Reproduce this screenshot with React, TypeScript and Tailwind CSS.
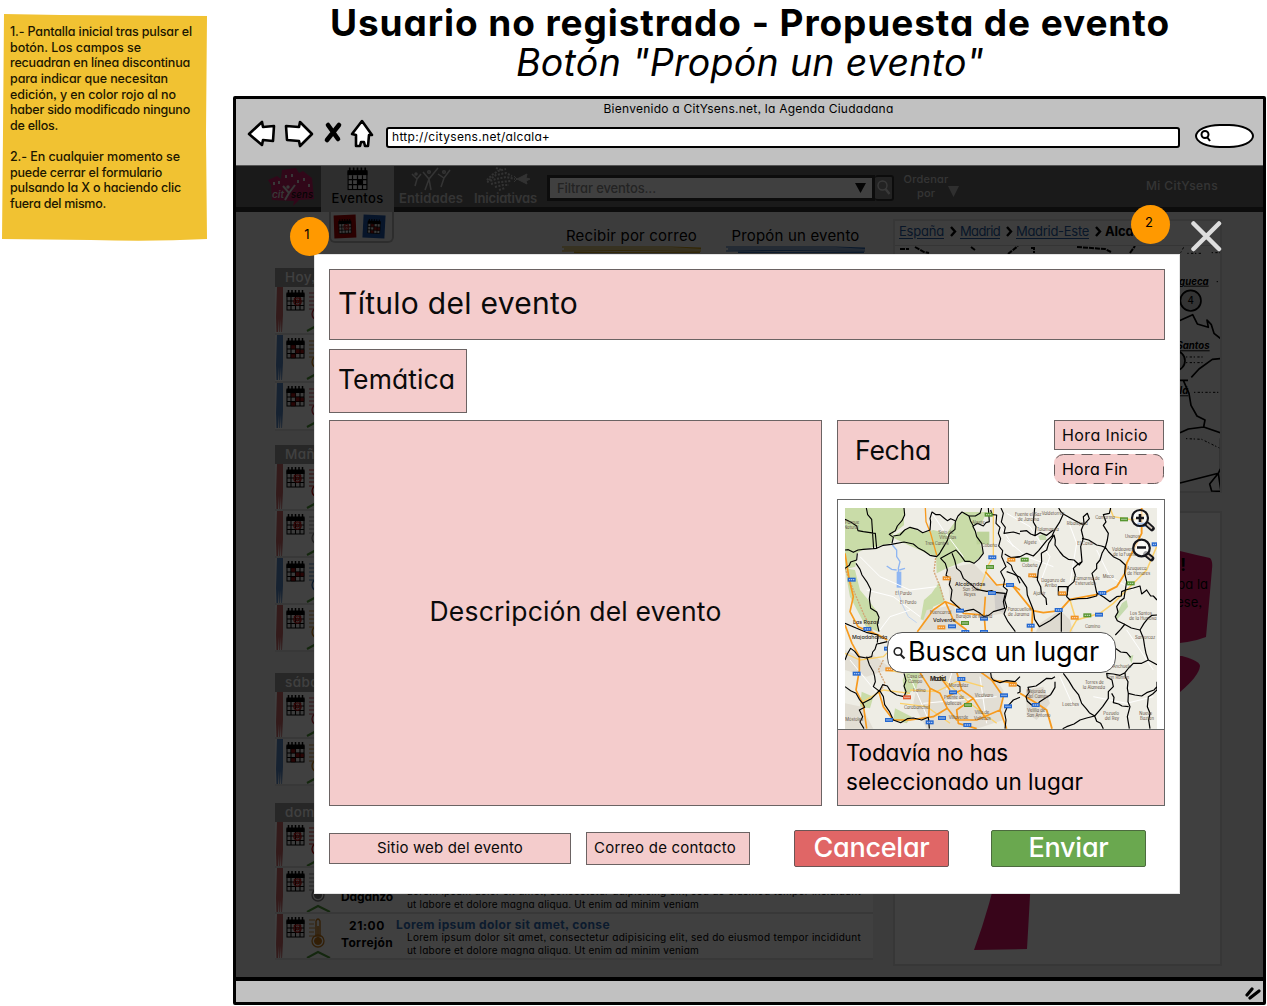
import { useLayoutEffect, useRef } from "react";
import type { ReactNode } from "react";

/* One line of text whose tracking is adjusted so that it spans `w` pixels. */
function Fit({ w, className = "", children }: { w: number; className?: string; children: string }) {
  const ref = useRef<HTMLSpanElement>(null);
  useLayoutEffect(() => {
    const el = ref.current;
    if (!el) return;
    el.style.letterSpacing = "0px";
    const natural = el.getBoundingClientRect().width;
    el.style.letterSpacing = `${(w - natural) / children.length}px`;
  }, [w, children]);
  return (
    <span ref={ref} className={`inline-block shrink-0 whitespace-nowrap ${className}`}>
      {children}
    </span>
  );
}

const noteLines: [string, number][] = [
  ["1.- Pantalla inicial tras pulsar el", 182],
  ["botón. Los campos se", 131],
  ["recuadran en línea discontinua", 180],
  ["para indicar que necesitan", 158],
  ["edición, y en color rojo al no", 166],
  ["haber sido modificado ninguno", 180],
  ["de ellos.", 48],
  ["", 0],
  ["2.- En cualquier momento se", 170],
  ["puede cerrar el formulario", 152],
  ["pulsando la X o haciendo clic", 171],
  ["fuera del mismo.", 96],
];

function Note() {
  return (
    <div className="relative mt-[13px] ml-px h-[229px] w-[207px]">
      <svg className="absolute inset-0" width="207" height="229">
        <path d="M3 1 L60 2 L206 3 L205 120 L206 226 Q150 229 90 227 L1 226 L2 120Z" fill="#f1c232" />
      </svg>
      <div className="relative pt-[11px] pl-[9px] text-[12.5px] leading-[15.65px] font-medium text-[#1c1600]">
        {noteLines.map(([t, w], i) => (
          <div key={i} className="h-[15.65px]">
            {t && <Fit w={w}>{t}</Fit>}
          </div>
        ))}
      </div>
    </div>
  );
}

function BrowserBar() {
  return (
    <div className="h-[67px] border-b border-[#555] bg-[#c1c1c1]">
      <div className="flex h-[19px] items-center justify-center pr-0.5 text-[12px] leading-none">
        <Fit w={290}>Bienvenido a CitYsens.net, la Agenda Ciudadana</Fit>
      </div>
      <div className="flex h-[36px] items-center pl-[11px]">
        <svg width="130" height="34" className="-mt-[5px]" fill="#fff" stroke="#000" strokeWidth="2.6" strokeLinejoin="round">
          <path d="M2 17 L15 5 L16 10 L27 9 L26 24 L16 23 L15 28Z" />
          <path d="M39 9 L52 10 L53 5 L65 17 L53 29 L52 24 L40 23Z" />
          <path d="M81 8 L91 22 M92 8 L80 23" strokeWidth="4.6" strokeLinecap="round" />
          <path d="M115 4 L105 17 L109 18 L109 29 L113 29 L114 25 L117 25 L118 29 L121 29 L122 18 L125 18Z" />
        </svg>
        <div className="mt-[2px] ml-[9px] flex h-[21px] w-[794px] items-center rounded-[3px] border-2 border-black bg-white pl-[4px] text-[12px] leading-none">
          <Fit w={158} className="-mt-[1px]">http://citysens.net/alcala+</Fit>
        </div>
        <div className="ml-[15px] flex h-[24px] w-[59px] items-center rounded-[42%/50%] border-2 border-black bg-white pl-[2px]">
          <svg width="12" height="14" fill="none" stroke="#000" strokeWidth="2">
            <circle cx="6" cy="5.5" r="3.5" />
            <path d="M8 8 L11 12" />
          </svg>
        </div>
      </div>
    </div>
  );
}

function CalendarIcon({ kind = "red", w = 19, h = 21 }: { kind?: "red" | "blue" | "plain"; w?: number; h?: number }) {
  return (
    <svg width={w} height={h} viewBox="0 0 19 21" className="shrink-0">
      <rect x="1" y="4" width="17" height="16" fill="#eee" stroke="#000" strokeWidth="1" />
      <rect x="0.5" y="2.5" width="18" height="4.5" fill="#000" />
      <path d="M2.500 0V4M6 0V4M9.500 0V4M13 0V4M16.500 0V4" stroke="#000" strokeWidth="1.500" />
      <path d="M5 7V20M9.500 7V20M14 7V20M1 11H18M1 15.500H18" stroke="#000" strokeWidth="1.100" />
      {kind === "plain" && <rect x="9.500" y="11" width="4.500" height="4.500" fill="#000" />}
      {kind === "red" && (
        <g fill="none" stroke="#c01515" strokeWidth="1.400">
          <circle cx="11.500" cy="11.500" r="3.600" />
          <circle cx="11.500" cy="11.500" r="1.400" />
          <path d="M8 8L9.500 9.500M15 8L13.500 9.500" />
        </g>
      )}
      {kind === "blue" && (
        <g fill="#a01515" stroke="#000" strokeWidth=".5">
          <path d="M5 7h4.500v4H5zM9.500 11H14v4.500H9.500zM14 15.500h4v-4h-4zM5 16h4.500v4H5z" />
        </g>
      )}
    </svg>
  );
}

function Logo() {
  return (
    <svg width="48" height="42" viewBox="0 0 48 42" className="shrink-0">
      <path d="M0 14 L9 10 L13 13 L14 4 L28 2 L31 7 L35 5 L44 12 L46 33 L31 34 L25 40 L26 35 L4 34 L3 19Z" fill="#c41e63" />
      <path d="M6 16v3M11 15v3M18 9v3M24 8v3M30 14v3M36 12v3M41 18v3" stroke="#ddd" strokeWidth="2" />
      <path d="M15 20 L21 27 L27 19 M21 27 L17 34" stroke="#ddd" strokeWidth="2" fill="none" />
      <circle cx="20" cy="21" r="1.700" fill="#ddd" />
      <text x="4" y="32" fontSize="10" fontStyle="italic" fontWeight="600" textLength="12" fill="#ddd">cit</text>
      <text x="23" y="32" fontSize="9.500" fontStyle="italic" fontWeight="500" textLength="22" fill="#111">sens</text>
    </svg>
  );
}

function SiteHeader() {
  return (
    <div className="flex h-[46px] border-b-[5px] border-[#303030] bg-[#686868] pl-[32px] text-[13px] leading-none">
      <Logo />
      <div className="ml-[5px] flex h-[46px] w-[73px] flex-col items-center bg-[#b8b8b8] pt-px text-black">
        <CalendarIcon kind="plain" w={21} h={24} />
        <Fit w={52} className="mt-[1px] font-medium">Eventos</Fit>
      </div>
      <div className="ml-[5px] flex w-[64px] flex-col items-center text-[#d0d0d0]">
        <svg width="42" height="25" fill="none" stroke="#d0d0d0" strokeWidth="1.500">
          <path d="M2 8 L7 13 L11 8 M7 13 L5 20 M13 6 L19 13 L28 2 M19 13 L15 24 M19 13L21 24 M28 8 L34 12 L40 4 M34 12 L31 21" />
          <circle cx="6" cy="8" r="1" />
          <circle cx="19" cy="6" r="1.300" />
          <circle cx="34" cy="6" r="1.300" />
        </svg>
        <Fit w={64} className="mt-px font-semibold">Entidades</Fit>
      </div>
      <div className="ml-[11px] flex w-[63px] flex-col items-center text-[#d0d0d0]">
        <svg width="48" height="25" className="ml-1" fill="none" stroke="#c8c8c8" strokeWidth="2" strokeDasharray="2 1.500">
          <path d="M3 14L8 9L14 5L22 3 M5 14L12 9L22 7L28 10 M3 16L12 13L22 11L31 13 M7 18L16 16L27 15 M11 21L19 19L25 19 M15 24L21 22M12 2L18 4" />
          <path d="M33 13 L39 10 L43 8 L42 12 L46 13 L42 15 L43 18 L39 16Z M33 13L30 10M33 13L30 16" fill="#c8c8c8" strokeDasharray="none" strokeWidth="1" />
        </svg>
        <Fit w={63} className="mt-px font-semibold">Iniciativas</Fit>
      </div>
      <div className="mt-[9px] ml-[10px] flex h-[26px] w-[328px] items-center justify-between border-[3px] border-[#303030] bg-white pr-[6px] pl-[7px] text-[#8c8c8c]">
        <Fit w={99} className="font-medium">Filtrar eventos...</Fit>
        <svg width="11" height="12"><path d="M0 1H11L5.500 11Z" fill="#111" /></svg>
      </div>
      <div className="mt-[9px] flex h-[26px] w-[19px] items-center justify-center rounded-[3px] border-[2px] border-l-0 border-[#303030] bg-[#8a8a8a]">
        <svg width="16" height="18" fill="none" stroke="#e4e4e4" strokeWidth="1.400">
          <circle cx="6.500" cy="6.500" r="4.500" />
          <path d="M9.500 10L13.500 15" strokeWidth="2.300" />
        </svg>
      </div>
      <div className="mt-[6px] ml-[9px] flex w-[46px] flex-col items-center text-[11px] leading-[14px] font-medium text-[#d0d0d0]">
        <Fit w={45}>Ordenar</Fit>
        <Fit w={18}>por</Fit>
      </div>
      <svg className="mt-[20px] -ml-px" width="11" height="12"><path d="M0 0H11L5.500 11Z" fill="#bbb" /></svg>
      <Fit w={72} className="mt-[14px] ml-[187px] text-[12px] font-medium text-[#d0d0d0]">Mi CitYsens</Fit>
    </div>
  );
}

function Thermometer({ color }: { color: string }) {
  return (
    <svg width="26" height="46" className="shrink-0" fill="none" stroke={color}>
      <path d="M4 6h6M4 10h5M4 14h6M4 18h5M4 22h5" strokeWidth=".8" />
      <path d="M11 23V7Q13 3 15 7V23" strokeWidth="1.400" />
      <circle cx="13" cy="27" r="6" strokeWidth="1.300" />
      <circle cx="13" cy="27" r="3.500" fill={color} />
      <path d="M13 12V26" strokeWidth="1.500" />
      <path d="M2 44L13 38L25 44" stroke="#4f9a3a" strokeWidth="2" />
    </svg>
  );
}

type Row = { red: boolean; temp: string; time?: string; place?: string };

function EventRow({ red, temp, time, place }: Row) {
  return (
    <div className="flex h-full overflow-hidden border-b-2 border-[#dedede] bg-[#fdfdfd]">
      <svg width="8" height="46" className="ml-px shrink-0" fill={red ? "#c96a6a" : "#5a88c4"}>
        <path d="M1 0H7L7 28L6 45H5.300L5 32L4 45H3.300L3 32L2 45H0.500L0 30Z" />
      </svg>
      <div className="pt-[3px] pl-[2px]"><CalendarIcon kind={red ? "red" : "blue"} /></div>
      <Thermometer color={temp} />
      {place && (
        <>
          <div className="flex w-[72px] shrink-0 flex-col items-center pt-[3px] text-[12px] leading-[17px] font-bold">
            <Fit w={36}>{time ?? ""}</Fit>
            <Fit w={52}>{place}</Fit>
          </div>
          <div className="pt-[4px] text-[10px] leading-[13px]">
            <div className="-ml-[7px] h-[13px] text-[12px] leading-[13px] font-bold text-[#2f6cb8]"><Fit w={214}>Lorem ipsum dolor sit amet, conse</Fit></div>
            <div className="h-[13px] pl-1"><Fit w={454}>Lorem ipsum dolor sit amet, consectetur adipisicing elit, sed do eiusmod tempor incididunt</Fit></div>
            <div className="h-[13px] pl-1"><Fit w={292}>ut labore et dolore magna aliqua. Ut enim ad minim veniam</Fit></div>
          </div>
        </>
      )}
    </div>
  );
}

function DayGroup({ title, className, rowClass, rows }: { title: string; className: string; rowClass: string; rows: Row[] }) {
  return (
    <section className={className}>
      <h3 className="h-[19px] bg-[#9a9a9a] pl-[10px] text-[13.500px] leading-[19px] font-medium tracking-[.4px] text-[#fff]">{title}</h3>
      {rows.map((r, i) => (
        <div key={i} className={rowClass}><EventRow {...r} /></div>
      ))}
    </section>
  );
}

function Strokes({ color }: { color: string }) {
  return (
    <svg width="139" height="7" stroke={color} strokeWidth="1.200" fill="none">
      <path d="M0 1H110L139 2M2 3H139M0 5L60 4.500L139 5M12 6.300H138" />
    </svg>
  );
}

function EventList() {
  return (
    <div className="w-[598px]">
      <div className="flex h-[56px]">
        <div className="ml-[54px] flex h-[31px] w-[65px] gap-[7px] rounded-b-[6px] border-2 border-t-0 border-[#b4b4b4] pt-[3px] pl-[3px]">
          <span className="flex h-[23px] w-[22px] -rotate-2 items-center justify-center bg-[#a80000]"><CalendarIcon w={14} h={15} /></span>
          <span className="flex h-[23px] w-[22px] rotate-3 items-center justify-center bg-[#1c55a8]"><CalendarIcon kind="blue" w={14} h={15} /></span>
        </div>
        <div className="ml-[168px] flex w-[139px] flex-col items-center pt-[14px] text-[15px] leading-[20px]">
          <Fit w={131} className="h-[20px]">Recibir por correo</Fit>
          <Strokes color="#c89a18" />
        </div>
        <div className="ml-[25px] flex w-[139px] flex-col items-center pt-[14px] text-[15px] leading-[20px]">
          <Fit w={128} className="h-[20px]">Propón un evento</Fit>
          <Strokes color="#2f68b0" />
        </div>
      </div>
      <DayGroup title="Hoy, 21" className="" rowClass="h-[48px]" rows={[
        { red: true, temp: "#c02838" }, { red: false, temp: "#c88018" }, { red: false, temp: "#c02838" },
      ]} />
      <DayGroup title="Mañana" className="mt-[14px]" rowClass="h-[47px]" rows={[
        { red: true, temp: "#c00000" }, { red: true, temp: "#888" }, { red: false, temp: "#2868b0" }, { red: true, temp: "#c88018" },
      ]} />
      <DayGroup title="sábado" className="mt-[21px]" rowClass="h-[47px]" rows={[
        { red: true, temp: "#c02838" }, { red: false, temp: "#c88018" },
      ]} />
      <DayGroup title="domingo" className="mt-[17px]" rowClass="h-[46px]" rows={[
        { red: true, temp: "#c00000" },
        { red: true, temp: "#777", time: "20:00", place: "Daganzo" },
        { red: true, temp: "#c87a18", time: "21:00", place: "Torrejón" },
      ]} />
    </div>
  );
}

function Chevron() {
  return (
    <svg width="7" height="11" className="mr-[3px] ml-[6px] shrink-0" fill="none" stroke="#000" strokeWidth="2.400"><path d="M1 1L5 5.500L1 10" /></svg>
  );
}

function SidePanels() {
  return (
    <div className="w-[330px] pt-[7px]">
      <div className="h-[274px] w-[329px] border-2 border-[#dadada] bg-[#f8f8f8]">
        <div className="flex h-[25px] items-center overflow-hidden border-b border-[#d4d4d4] pb-[3px] pl-[4px] text-[13px] leading-none text-[#2559a0]">
          <Fit w={45} className="underline underline-offset-2">España</Fit>
          <Chevron />
          <Fit w={40} className="underline underline-offset-2">Madrid</Fit>
          <Chevron />
          <Fit w={73} className="underline underline-offset-2">Madrid-Este</Fit>
          <Chevron />
          <Fit w={40} className="font-bold text-black">Alcalá</Fit>
        </div>
        <svg width="325" height="246" className="overflow-hidden">
          <path d="M5 3H14M20 1L29 6L34 7M76 1L80 4M113 8L123 0M136 2H139V7M182 1L210 3L216 6M235 7L240 0" stroke="#000" strokeWidth="2" strokeDasharray="5 1" fill="none" />
          <g transform="translate(245 -46) scale(.3333)">
            <g fill="none" stroke="#000" strokeWidth="5" strokeLinejoin="round">
              <path d="M118 362L158 344L172 372L205 382L201 360L214 374L222 400L242 416M242 476L217 478L177 507L154 532M120 541H144M130 541L147 580L153 616L171 648L195 660L191 681L243 699M120 698L145 687L191 681M242 715V805L235 820L243 874L215 873L209 852L235 820L120 849" />
            </g>
            <path d="M122 158L132 140M142 160H184M215 158H240M138 471H190M138 488H188M162 577H240M138 716L185 718L238 744M230 245H240" stroke="#000" strokeWidth="3" strokeDasharray="4 7 7 5" fill="none" />
            <g fontSize="29" fontWeight="700" fontStyle="italic" textAnchor="end" textDecoration="underline">
              <text x="206" y="254">Villalgueca</text>
              <text x="209" y="448">Los Santos</text>
              <text x="145" y="583">Alcalá</text>
            </g>
            <circle cx="152" cy="302" r="31" fill="#c9c9c9" stroke="#000" strokeWidth="5" />
            <circle cx="105" cy="482" r="30" fill="#c9c9c9" stroke="#000" strokeWidth="5" />
            <text x="152" y="312" fontSize="29" textAnchor="middle" fontWeight="500">4</text>
          </g>
        </svg>
      </div>
      <div className="mt-[18px] h-[455px] w-[329px] border-2 border-[#dadada] bg-[#fdfdfd]">
        <svg width="325" height="451">
          <g fill="#e0146a">
            <path d="M101 36L285 38Q301 42 315 45Q318 48 317 56Q314 91 311 124Q296 130 271 131L101 131Z" />
            <path d="M241 143H287Q305 148 305 153Q304 163 285 179L201 221Z" />
            <path d="M106 301H139Q137 350 132 436L79 437Q96 391 106 341Z" />
          </g>
          <g fontSize="13" textAnchor="end">
            <text x="291" y="58" fontSize="17" fontWeight="700">!</text>
            <text x="313" y="76">Aprueba la</text>
            <text x="307" y="94">interese,</text>
          </g>
        </svg>
      </div>
    </div>
  );
}

function Field({ className, children }: { className: string; children: ReactNode }) {
  return <div className={`flex items-center border border-[#6b6363] bg-[#f4cccc] leading-none text-[#0a0a0a] ${className}`}>{children}</div>;
}

type Label = [number, number, string];

const townsLeft: Label[] = [
  [285, 165, "Tres Cantos"], [45, 102, "Parque"], [42, 117, "Natural"], [325, 132, "Soto de"], [328, 147, "Viñuelas"], [196, 314, "El Pardo"],
  [210, 343, "El Pardo"], [300, 371, "Fuencarral"], [398, 303, "San Seb."], [402, 318, "Reyes"], [378, 384, "Barajas de Madrid"], [230, 565, "Casa de"],
  [234, 580, "Campo"], [250, 606, "Latina"], [222, 657, "Carabanchel"], [356, 592, "Moratalaz"], [342, 628, "Puente de"], [344, 645, "Vallecas"],
  [434, 622, "Vicálvaro"], [434, 672, "Villa de"], [432, 691, "Vallecas"], [356, 688, "Villaverde"], [46, 692, "Móstoles"],
  [426, 103, "Algete"], [455, 172, "Cobeña"],
];

const townsRight: Label[] = [
  [45, 78, "Fuente el Saz"], [53, 93, "de Jarama"], [125, 74, "Valdetorres"], [110, 122, "Talamanca"], [200, 106, "Ribatejada"], [72, 162, "Algete"],
  [66, 232, "Cobeña"], [232, 165, "El Casar"], [286, 86, "Camarma"], [375, 143, "Usanos"], [336, 184, "Valdeavero"], [339, 199, "de la Fuente"],
  [124, 276, "Daganzo de"], [134, 291, "Arriba"], [222, 270, "Camarma de"], [226, 285, "Esteruelas"], [308, 264, "Meco"], [380, 240, "Azuqueca"],
  [382, 255, "de Henares"], [100, 314, "Ajalvir"], [23, 364, "Paracuellos"], [24, 379, "de Jarama"], [255, 415, "Camino"], [390, 374, "Los Santos"],
  [388, 389, "de la Humosa"], [405, 446, "Santorcaz"], [338, 533, "Anchuelo"], [255, 582, "Torres de"], [248, 597, "la Alameda"], [320, 568, "San Román"],
  [80, 608, "Mejorada"], [82, 623, "del Campo"], [82, 667, "Velilla de"], [80, 682, "San Antonio"], [187, 648, "Loeches"], [310, 675, "Pozuelo"],
  [314, 690, "del Rey"], [418, 675, "Nuevo"], [420, 690, "Baztán"],
];

const shieldsLeft: [number, number, string][] = [
  [475, 196, "#2468d0"], [53, 263, "#2468d0"], [100, 411, "#2468d0"], [354, 403, "#2468d0"], [378, 356, "#2468d0"], [474, 303, "#2468d0"],
  [450, 380, "#2468d0"], [528, 279, "#2468d0"], [68, 545, "#2468d0"], [382, 561, "#2468d0"], [357, 601, "#2468d0"], [510, 610, "#2468d0"],
  [522, 643, "#2468d0"], [165, 684, "#2468d0"], [287, 691, "#2468d0"], [324, 678, "#2468d0"], [400, 699, "#2468d0"], [468, 225, "#55952f"],
  [393, 393, "#55952f"], [402, 639, "#55952f"], [464, 68, "#55952f"], [338, 259, "#f09020"], [532, 203, "#f09020"], [322, 406, "#f09020"],
  [536, 578, "#f09020"], [219, 616, "#e05a30"], [166, 532, "#f09020"], [394, 420, "#2468d0"], [450, 420, "#2468d0"], [162, 470, "#2468d0"],
];

const shieldsRight: [number, number, string][] = [
  [164, 354, "#2468d0"], [80, 401, "#2468d0"], [295, 303, "#2468d0"], [285, 368, "#2468d0"], [95, 639, "#2468d0"],
  [412, 98, "#2468d0"], [455, 157, "#2468d0"], [62, 203, "#55952f"], [250, 370, "#55952f"], [380, 274, "#55952f"],
  [360, 82, "#55952f"], [85, 250, "#f09020"], [175, 304, "#f09020"], [212, 377, "#f09020"],
];

function MapLabels({ shift, towns, shields }: { shift: string; towns: Label[]; shields: [number, number, string][] }) {
  return (
    <g transform={shift}>
      <g>
        {shields.map(([x, y, c], i) => (
          <g key={i}>
            <rect x={x} y={y} width="24" height="12" fill={c} />
            <path d={`M${x + 4} ${y + 6}h16`} stroke="#fff" strokeWidth="4" strokeDasharray="4 2" opacity=".6" />
          </g>
        ))}
      </g>
      <g fontSize="12.500" fill="#5e5044">
        {towns.map(([x, y, t], i) => <text key={i} x={x} y={y}>{t}</text>)}
      </g>
    </g>
  );
}

function PlaceMap() {
  return (
    <svg width="312" height="221" viewBox="0 0 312 221" className="block">
      <rect width="312" height="221" fill="#eeede5" />
      <g transform="translate(-15 -18) scale(.33333)">
        <g fill="#c9dca8">
          <path d="M45 54H222V106L190 130L184 160L100 178L82 190L45 188Z" />
          <path d="M184 140L240 112L278 128L310 120L350 130L375 95L400 66H470L455 100L430 105L442 140L460 190L430 220L400 215L350 235L320 250L318 200L280 185L220 158Z" />
          <path d="M45 235L75 240L90 300L115 330L145 370V425L108 410L60 320Z" />
          <path d="M328 275L344 335L310 350L290 394L272 388L282 330L305 310Z" />
          <path d="M45 180L80 190L76 230L45 238Z" />
          <path d="M228 545H270L276 590L250 600L225 620L218 570ZM95 605L130 620L120 655L90 650ZM195 655L245 680L230 700L190 690Z" />
        </g>
        <path d="M306 66L350 85L376 90L350 128L310 118L300 122V95Z" fill="#eeede5" />
        <path d="M440 125h38v38h-38z" fill="#bdd39a" />
        <g fill="#e2ded4">
          <path d="M350 235L430 220L470 260L520 300L525 370L460 380L385 352L360 330Z" />
          <path d="M290 360L370 345L400 420H270ZM270 545H480L520 600V690L440 716H290L250 640ZM45 480L90 500L130 495L190 540H170L110 560L45 540ZM45 640L95 650L130 716H45Z" />
        </g>
        <path d="M492 300L524 310L526 370L496 360Z" fill="#cfccc8" />
        <path d="M187 165L200 180V200L210 215L205 235L208 285M170 228L185 238L200 240M208 240L225 235" fill="none" stroke="#8fb6f2" strokeWidth="4" />
        <path d="M205 300L215 340L235 380L260 398" fill="none" stroke="#b4cdf2" strokeWidth="2.500" />
        <path d="M200 245H214V293H200Z" fill="#8fb6f2" />
        <g stroke="#fff" strokeWidth="3" fill="none">
          <path d="M90 200L150 260L240 300L320 290M110 300L190 320L270 380M150 420L180 380L240 360M300 60L340 120L400 200M500 90L550 170M380 500L350 600M60 510L150 620M240 560L300 700M450 560L470 700M280 640L500 620" />
        </g>
        <g stroke="#d3a273" strokeWidth="4" fill="none" strokeDasharray="6 3">
          <path d="M318 195L312 245L330 290L345 340M45 235L70 300L100 370L130 430L172 450M160 510L145 540L165 580L148 610" />
        </g>
        <g stroke="#fbd06a" strokeWidth="4" fill="none">
          <path d="M490 54V200L475 225L450 300M45 490L90 510L160 500L190 470M170 540L215 548L300 540M240 600L320 605L390 570L460 590M210 640L290 650L360 700M330 560L420 640L500 700M90 640L160 600L240 610" />
        </g>
        <g stroke="#f79a1e" strokeWidth="5" fill="none" strokeLinejoin="round">
          <path d="M286 54L288 95L302 130L320 195" strokeWidth="4" />
          <path d="M45 190L58 270L70 320L60 365L84 410L145 435L172 450" />
          <path d="M45 405L66 460L88 500V540L78 600L100 645L110 716" />
          <path d="M262 425L310 360L346 335L385 350L400 370L462 375L466 320M346 335L370 390L410 420" />
          <path d="M466 245L500 285L540 282L570 300M462 370L466 420" />
          <path d="M270 548L300 595L330 610L352 655L310 680L240 690L190 690L160 650L145 600M300 595L296 690M352 655L380 690L440 690L510 660L520 620L485 570L450 545M380 545L395 600L430 625L470 690M360 600L330 560M395 600L350 620M430 625L380 660L385 700L440 716M485 570L560 580M510 660L530 716" />
        </g>
        <g stroke="#000" strokeWidth="3.400" fill="none" strokeLinejoin="round">
          <path d="M109 54L113 74L125 88L127 118L131 178M45 88L62 96L80 108L84 122L100 125L136 130L140 175M45 180L55 179L70 187L84 180L100 178L140 175L160 166L184 163L222 156L250 162L266 175L282 183L300 196L320 200L328 192L332 185L352 152L358 132L375 118L376 95L384 78L396 66L417 78L436 78L450 70L455 54" />
          <path d="M222 54L224 75L216 92L202 108L196 122L178 133L190 142L186 160M190 138L210 135L224 120L240 112L262 118L278 128L300 120L302 95L300 85L306 66L318 74L330 74L342 84L352 92L362 86L376 92M417 78L422 94L430 108L442 100L460 108L468 98L478 95L475 54M428 108L436 124L440 140L455 160L460 190L446 208L432 220L418 214L405 214L392 196L378 180L355 192L332 205L346 220L352 240L348 256L362 266L358 284L366 300L362 330L385 352L400 364L430 358L450 370L462 380L476 376L490 365L524 355L520 335L526 310L500 308L486 302L470 304L440 298L420 280L400 265L392 245L380 235L374 210L366 190" />
          <path d="M482 60L486 74L500 75L498 100L510 112L505 130L512 146L506 168L518 182L515 200L528 230L512 245L524 270L520 290L532 300L524 330L530 350L522 372L534 395L556 425M513 54L520 70L514 96L526 112L522 130L550 126L570 132M524 192L545 204L570 200M530 215L544 226L548 240L560 256L570 280" />
          <path d="M45 235L58 226L62 216L80 210L82 190M78 220L90 238L96 255L112 278L122 298L118 326L122 355L140 366L147 382L142 404L147 425M45 400L64 408L80 415L112 428L144 435L142 458M45 510L52 492L62 475L74 484L86 500L110 504L125 500L128 486L135 478L140 462L150 460L172 455M110 500L118 524L130 545L134 560L136 575L130 590L150 605M45 590L62 602L78 610L88 628L98 640L124 626L150 600L158 584L172 588L182 604L200 615L222 620L228 605L222 588L228 572L222 550M148 600L160 620L164 644L178 664L190 690L212 698L232 686L250 684L275 690L295 682L298 716M98 640L104 652L88 660L98 680L90 696L102 716" />
          <path d="M482 548L484 562L490 570L510 578L530 572L555 575L570 560M525 716L528 690L524 670L532 650L550 630L570 622" />
        </g>
      </g>
      <g transform="translate(155 -18) scale(.33333)">
        <path d="M120 400L180 360L210 390L218 425H108ZM78 600L130 590L150 640L110 690L80 670Z" fill="#dedad0" />
        <path d="M346 380L366 340L380 330L384 350L350 390ZM115 138L135 130L140 150L120 150ZM385 500L400 495L395 520Z" fill="#c5dbae" />
        <g stroke="#fff" strokeWidth="3" fill="none">
          <path d="M20 70L90 110L150 200L120 280M200 80L230 160L210 280M290 180L330 260L400 300M400 60L440 200M180 560L220 650M380 420L460 540M280 620L380 640L460 620M20 150L80 200L160 230" />
        </g>
        <g stroke="#fbd06a" strokeWidth="4.500" fill="none">
          <path d="M470 170L440 240L390 290L340 340L300 370L230 390L210 425M330 54L340 80L400 90L440 70M210 330L225 380" />
        </g>
        <g stroke="#f79a1e" strokeWidth="5.500" fill="none" strokeLinejoin="round">
          <path d="M425 54V130L380 220L375 250L350 290L310 310L210 328L180 362L130 368L98 362L60 315L40 290L20 284M98 362L95 425M60 610L110 640L140 660L156 716" />
        </g>
        <g stroke="#000" strokeWidth="3.600" fill="none" strokeLinejoin="round">
          <path d="M60 124L80 122L92 132L105 137L108 110L100 96L104 54M105 137L120 128L140 136L160 120M80 190L100 198L116 182L140 152L156 138L165 118L178 98L190 72L182 64L176 54M190 72L215 86L240 100L252 104L268 86L262 70L250 80L252 100L244 120L250 145L242 170L246 215L238 225L222 210L205 208L190 198L180 186L165 165L166 150L162 135L146 160L140 180L124 190L125 215L115 240L112 270L122 290L124 310L138 325L140 345M184 357V425M80 190L60 200L30 203M20 245L40 252L60 262L72 280L80 292L82 315L92 340L100 360L104 388L118 410L150 392L180 370M86 258L112 262" />
          <path d="M332 54L328 70L310 74L318 96L310 106L325 130L322 150L316 172L304 168L290 165L266 150L246 145M316 172L326 186L340 200L360 210L376 225L374 250L380 275L376 300L365 305L364 318L350 320L330 335L312 322L290 308L284 280L276 250L290 236L290 222L300 210L306 190L316 172M246 215L234 222L220 235L226 255L222 275L205 290L200 320L210 330L235 326L262 325L290 318L292 308M175 290H202V315H175ZM376 300L400 294L420 288L425 312L440 300L452 318L460 318L471 330M376 300L372 325L360 334L350 350L354 366L346 380L352 392L372 402L394 414L420 420L432 400L444 385L456 376L471 375" />
          <path d="M346 435L362 418L375 402M420 420L430 444L434 470L438 490L445 510L425 520L400 520L386 534L375 548L376 560L384 575L382 595L385 610L405 615L425 618L440 608L462 600L471 590M346 475L362 486L380 488L392 502M375 548L360 556L340 552L320 550L322 562L336 570L340 590L325 605L325 625L308 650L296 664L284 678L268 668L258 655L245 640L236 615L220 595L206 572L190 550M445 510L471 524M471 575V600L458 612L445 620L442 650L450 670L446 690L450 716M385 610L384 635L390 650L382 680L388 716M335 610L342 622L340 638L356 642L366 648L386 650M284 678L290 694L302 700L310 716M284 678L260 684L240 690L222 702L200 710L188 716M165 560L155 566L140 565L120 580L108 588L84 592L88 606L78 620L82 634L95 645L112 648L118 636L140 622L152 614L158 604L165 592V575M50 584L60 590L60 606L52 610" />
        </g>
      </g>
      <MapLabels shift="translate(-15 -18) scale(.33333)" towns={townsLeft} shields={shieldsLeft} />
      <MapLabels shift="translate(155 -18) scale(.33333)" towns={townsRight} shields={shieldsRight} />
      <g fontSize="5.300" fontWeight="500" fill="#2b2520">
        <text x="110" y="78">Alcobendas</text>
        <text x="8" y="116">Las Rozas</text>
        <text x="7" y="131">Majadahonda</text>
        <text x="88" y="114">Valverde</text>
        <text x="85" y="173" fontSize="6" fontWeight="700" textLength="16">Madrid</text>
      </g>
      <g fill="rgba(255,255,255,.6)" stroke="#15151a" strokeWidth="2.200">
        <path d="M302 16L307 20.500M301 46L306.500 50.500" strokeWidth="5.500" strokeLinecap="round" />
        <path d="M302 16L307 20.500M301 46L306.500 50.500" strokeWidth="1.800" stroke="#d4c9bd" />
        <circle cx="295" cy="10" r="8" />
        <circle cx="296.500" cy="40" r="8.300" />
        <path d="M291 10H299M295 6V14M292 39.500H301" strokeWidth="2.600" />
      </g>
    </svg>
  );
}

function ProposalDialog() {
  return (
    <div className="absolute top-[88px] left-[78px] h-[640px] w-[866px] border border-[#e4e4e4] bg-white pt-[14px] pl-[14px]">
      <Field className="h-[71px] w-[836px] pl-[8px] text-[30px]"><Fit w={240} className="-mt-[3px]">Título del evento</Fit></Field>
      <Field className="mt-[9px] h-[64px] w-[138px] pl-[8px] text-[26.5px]"><Fit w={117} className="-mt-[3px]">Temática</Fit></Field>
      <div className="mt-[7px] flex gap-[15px]">
        <Field className="h-[386px] w-[493px] justify-center text-[26.5px]"><Fit w={292} className="-mt-[3px]">Descripción del evento</Fit></Field>
        <div className="w-[328px]">
          <div className="flex justify-between pr-px">
            <Field className="h-[64px] w-[112px] justify-center text-[26.5px]"><Fit w={76} className="-mt-[3px]">Fecha</Fit></Field>
            <div className="flex flex-col gap-1 text-[16px]">
              <Field className="h-[30px] w-[110px] pl-[7px]"><Fit w={86} className="-mt-px">Hora Inicio</Fit></Field>
              <div className="relative flex h-[30px] w-[110px] items-center rounded-[9px] bg-[#f4cccc] pl-[8px] leading-none">
                <svg className="absolute inset-0" width="110" height="30">
                  <rect x=".5" y=".5" width="109" height="29" rx="9" fill="none" stroke="#665c5c" strokeDasharray="11 7" />
                </svg>
                <Fit w={66} className="-mt-px">Hora Fin</Fit>
              </div>
            </div>
          </div>
          <div className="relative mt-[15px] h-[307px] border border-[#666]">
            <div className="px-[7px] pt-[8px]"><PlaceMap /></div>
            <div className="h-[76px] border-t border-[#666] bg-[#f4cccc] pt-[8px] pl-[8px] text-[22.5px] leading-[29px]">
              <div className="h-[29px]"><Fit w={162}>Todavía no has</Fit></div>
              <div><Fit w={237}>seleccionado un lugar</Fit></div>
            </div>
            <div className="absolute top-[132px] left-[49px] flex h-[41px] w-[229px] items-center rounded-[15px] border border-[#555] bg-white pl-[5px] text-[27px] leading-none">
              <svg width="13" height="14" fill="none" stroke="#222" strokeWidth="1.600">
                <circle cx="5" cy="5.500" r="3.800" />
                <path d="M7.500 8.500L11.500 12.500" strokeWidth="2.200" />
              </svg>
              <Fit w={191} className="-mt-[3px] ml-[2px]">Busca un lugar</Fit>
            </div>
          </div>
        </div>
      </div>
      <div className="mt-[24px] flex h-[37px] items-center">
        <Field className="h-[31px] w-[242px] justify-center text-[15px]"><Fit w={146} className="-mt-0.5">Sitio web del evento</Fit></Field>
        <Field className="ml-[15px] h-[33px] w-[164px] pl-[7px] text-[15px]"><Fit w={142} className="-mt-0.5">Correo de contacto</Fit></Field>
        <button className="ml-[44px] flex h-[37px] w-[155px] items-center justify-center rounded-[2px] border border-[#6b5555] bg-[#e06666] text-[27px] leading-none font-medium text-white"><Fit w={116} className="-mt-[2px]">Cancelar</Fit></button>
        <button className="ml-[42px] flex h-[37px] w-[155px] items-center justify-center rounded-[2px] border border-[#4c6b3e] bg-[#6aa84f] text-[27px] leading-none font-medium text-white"><Fit w={80} className="-mt-[2px]">Enviar</Fit></button>
      </div>
    </div>
  );
}

export default function App() {
  return (
    <div className="flex h-[1006px] w-[1267px] overflow-hidden bg-white font-[Inter,'Liberation_Sans',sans-serif] text-black [font-feature-settings:'cv11','ss03']">
      <aside className="w-[233px] shrink-0"><Note /></aside>
      <main className="w-[1034px]">
        <header className="flex h-[96px] flex-col items-center pt-[2px]">
          <h1 className="h-[41px] text-[37px] leading-[42px] font-bold"><Fit w={840}>Usuario no registrado - Propuesta de evento</Fit></h1>
          <h2 className="h-[41px] text-[37.500px] leading-[40px] italic"><Fit w={468}>Botón "Propón un evento"</Fit></h2>
        </header>
        <div className="h-[909px] w-[1033px] rounded-[2px] border-[3px] border-black">
          <BrowserBar />
          <div className="relative h-[811px] overflow-hidden bg-[#f0f0f0]">
            <SiteHeader />
            <div className="flex gap-[20px] pl-[39px]">
              <EventList />
              <SidePanels />
            </div>
            <div className="absolute inset-0 bg-black/75" />
            <ProposalDialog />
            <div className="absolute top-[51px] left-[54px] flex h-[39px] w-[39px] items-center justify-center rounded-full bg-[#ff9900] pr-[5px] pb-[3px] text-[13px]">1</div>
            <div className="absolute top-[39px] left-[895px] flex h-[39px] w-[39px] items-center justify-center rounded-full bg-[#ff9900] pr-[3px] pb-[3px] text-[13px]">2</div>
            <svg className="absolute top-[55px] left-[955px]" width="31" height="31" stroke="#dedede" strokeWidth="4.500" strokeLinecap="round">
              <path d="M2.500 2.500L28 28M28 2.500L2.500 28" />
            </svg>
          </div>
          <div className="flex h-[25px] justify-end border-t-[4px] border-black bg-[#c1c1c1] pt-[5px] pr-px">
            <svg width="18" height="14" stroke="#000" strokeWidth="3.200" strokeLinecap="round">
              <path d="M3 9L8 3M6 12L15 5" />
            </svg>
          </div>
        </div>
      </main>
    </div>
  );
}
